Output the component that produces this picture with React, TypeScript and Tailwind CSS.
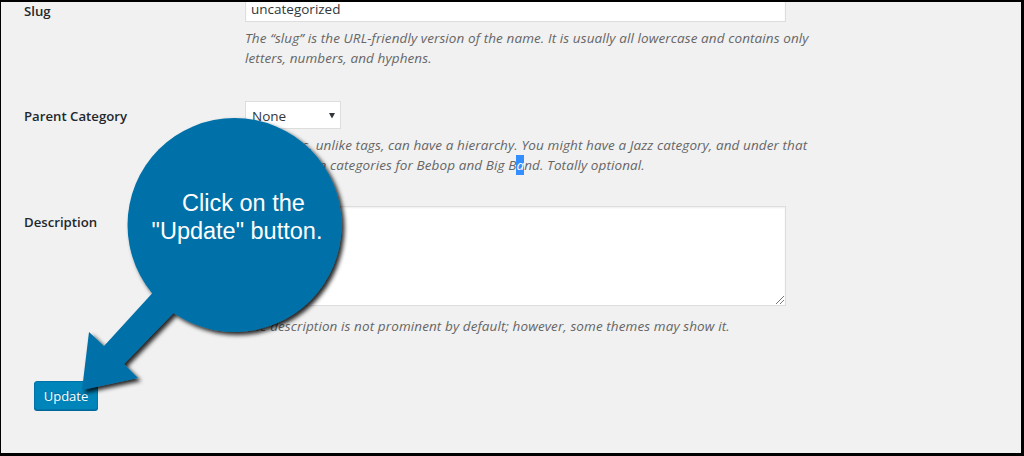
import React from "react";

const helpCls =
  "text-[13.5px] italic leading-[20px] tracking-[0.1px] text-[#666] whitespace-nowrap";

export default function App() {
  return (
    <div
      className="relative w-[1024px] h-[456px] overflow-hidden bg-[#f1f1f1] border-t-2 border-r-[3px] border-b-[3px] border-l border-black text-[#23282d]"
      style={{ fontFamily: '"Open Sans", "Noto Sans", sans-serif' }}
    >
      <div className="pl-[23px]">
        {/* Slug */}
        <div className="flex">
          <div className="w-[221px] shrink-0 -mt-[1px] text-[13.2px] font-semibold leading-[20px]">
            Slug
          </div>
          <div>
            <div className="-mt-[8px] w-[541px] h-[28px] border border-[#ddd] bg-white pl-[5px] pt-[4px] text-[13.5px] leading-[20px] text-[#32373c] shadow-[inset_0_1px_2px_rgba(0,0,0,0.07)]">
              uncategorized
            </div>
            <p className={`mt-[6px] ${helpCls}`}>
              The “slug” is the URL-friendly version of the name. It is usually
              all lowercase and contains only
              <br />
              letters, numbers, and hyphens.
            </p>
          </div>
        </div>

        {/* Parent Category */}
        <div className="flex mt-[33px]">
          <div className="w-[221px] shrink-0 mt-[5px] text-[13.2px] font-semibold leading-[20px]">
            Parent Category
          </div>
          <div>
            <div className="relative w-[96px] h-[28px] border border-[#ddd] bg-white pl-[6px] pt-[4px] text-[13.5px] leading-[20px] text-[#32373c]">
              None
              <svg
                className="absolute left-[83px] top-[11px]"
                width="6"
                height="6"
                viewBox="0 0 6 6"
              >
                <polygon points="0,0 6,0 3,5.5" fill="#32373c" />
              </svg>
            </div>
            <p className={`mt-[6px] ${helpCls}`}>
              Categories, unlike tags, can have a hierarchy. You might have a
              Jazz category, and under that
              <br />
              have children categories for Bebop and Big B
              <span className="inline-block bg-[#338fff] text-white">a</span>
              nd. Totally optional.
            </p>
          </div>
        </div>

        {/* Description */}
        <div className="flex mt-[31px]">
          <div className="w-[221px] shrink-0 mt-[6px] text-[13.2px] font-semibold leading-[20px]">
            Description
          </div>
          <div>
            <div className="relative w-[541px] h-[100px] border border-[#ddd] bg-white shadow-[inset_0_1px_2px_rgba(0,0,0,0.07)]">
              <svg
                className="absolute right-[1px] bottom-[1px]"
                width="9"
                height="9"
                viewBox="0 0 9 9"
              >
                <line x1="1" y1="9" x2="9" y2="1" stroke="#777" strokeWidth="1" />
                <line x1="5" y1="9" x2="9" y2="5" stroke="#777" strokeWidth="1" />
              </svg>
            </div>
            <p className={`mt-[10px] ${helpCls}`}>
              The description is not prominent by default; however, some themes
              may show it.
            </p>
          </div>
        </div>

        {/* Update button */}
        <div className="mt-[45px] ml-[10px]">
          <button className="flex items-center justify-center w-[64px] h-[29px] rounded-[3px] border border-[#0073aa] bg-[#0085ba] text-[13px] leading-[20px] text-white shadow-[0_1px_0_#006799] [text-shadow:0_-1px_1px_#006799]">
            Update
          </button>
        </div>
      </div>

      {/* Callout overlay */}
      <svg
        className="absolute left-[-1px] top-[-2px] pointer-events-none"
        width="1024"
        height="456"
        viewBox="0 0 1024 456"
      >
        <defs>
          <filter id="sh" x="-20%" y="-20%" width="140%" height="140%">
            <feDropShadow
              dx="3"
              dy="3"
              stdDeviation="2.2"
              floodColor="#000"
              floodOpacity="0.85"
            />
          </filter>
        </defs>
        <g filter="url(#sh)" fill="#0071a8">
          <polygon points="168,276 104,346 89,332 82,390 138,378 124,364 188,298" />
          <circle cx="234.5" cy="225" r="107" />
        </g>
      </svg>
      <div
        className="absolute left-[126px] top-[187px] w-[220px] text-center text-[23.5px] leading-[28px] text-white pointer-events-none"
        style={{ fontFamily: '"Liberation Sans", Arial, sans-serif' }}
      >
        <div className="pl-[13px]">Click on the</div>
        <div>"Update" button.</div>
      </div>
    </div>
  );
}
